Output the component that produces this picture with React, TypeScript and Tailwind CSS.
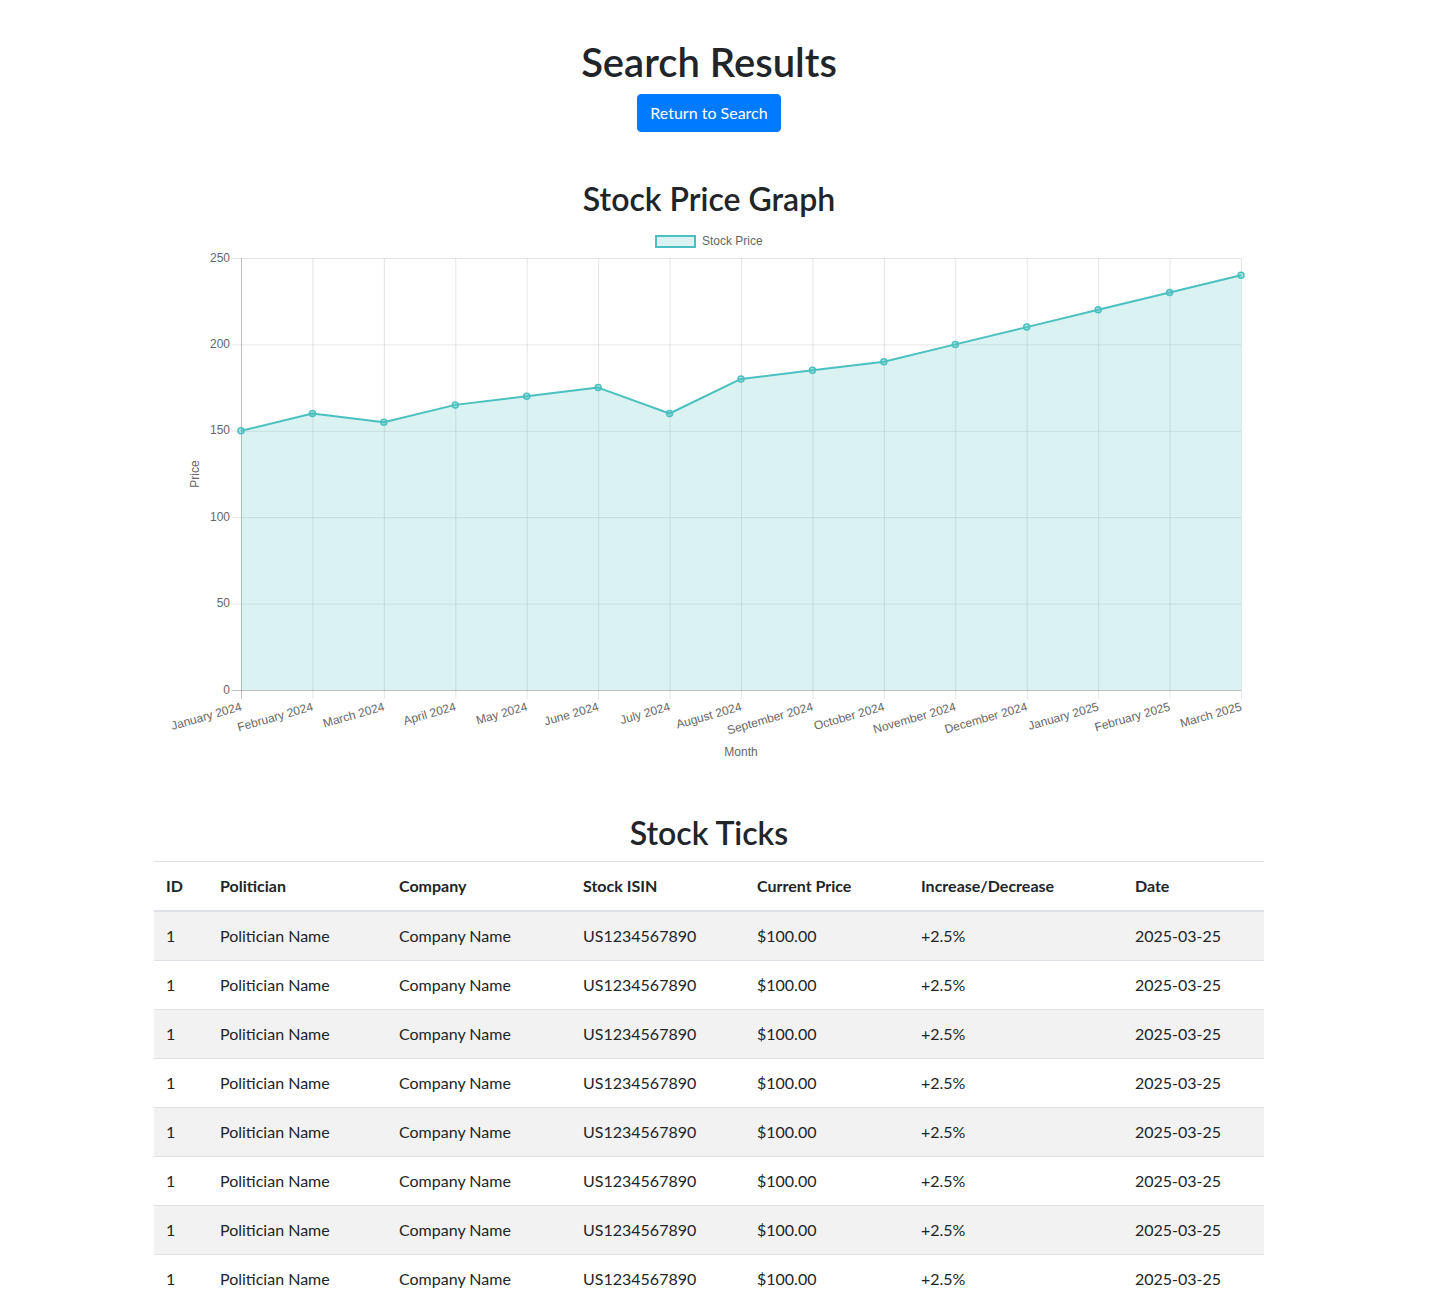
import React from "react";

const months = [
  "January 2024",
  "February 2024",
  "March 2024",
  "April 2024",
  "May 2024",
  "June 2024",
  "July 2024",
  "August 2024",
  "September 2024",
  "October 2024",
  "November 2024",
  "December 2024",
  "January 2025",
  "February 2025",
  "March 2025",
];
const values = [150, 160, 155, 165, 170, 175, 160, 180, 185, 190, 200, 210, 220, 230, 240];

const L = 87;
const R = 1087;
const T = 32;
const B = 464;
const xAt = (i: number) => L + ((R - L) * i) / (months.length - 1);
const yAt = (v: number) => B - ((B - T) * v) / 250;

function Chart() {
  const pts = values.map((v, i) => [xAt(i), yAt(v)] as const);
  const line = pts.map((p) => `${p[0]},${p[1]}`).join(" ");
  const area = `${L},${B} ${line} ${R},${B}`;
  const font = '"Liberation Sans", Arial, Helvetica, sans-serif';
  return (
    <svg width={1110} height={556} viewBox="0 0 1110 556" className="block" style={{ fontFamily: font }}>
      {/* legend */}
      <rect x={502} y={10} width={39} height={11} fill="rgba(75,192,192,0.2)" stroke="rgb(75,192,192)" strokeWidth={2} />
      <text x={548} y={15.5} fontSize={12} fill="#666" dominantBaseline="middle">
        Stock Price
      </text>
      {/* horizontal grid */}
      {[0, 50, 100, 150, 200, 250].map((v) => (
        <g key={v}>
          <line
            x1={78}
            x2={R}
            y1={yAt(v) + 0.5}
            y2={yAt(v) + 0.5}
            stroke={v === 0 ? "rgba(0,0,0,0.25)" : "rgba(0,0,0,0.1)"}
            strokeWidth={1}
          />
          <text x={76} y={yAt(v) + 0.5} fontSize={12} fill="#666" textAnchor="end" dominantBaseline="middle">
            {v}
          </text>
        </g>
      ))}
      {/* vertical grid */}
      {months.map((m, i) => (
        <line
          key={m}
          x1={xAt(i) + 0.5}
          x2={xAt(i) + 0.5}
          y1={T}
          y2={B + 9}
          stroke={i === 0 ? "rgba(0,0,0,0.25)" : "rgba(0,0,0,0.1)"}
          strokeWidth={1}
        />
      ))}
      {/* area + line */}
      <polygon points={area} fill="rgba(75,192,192,0.2)" />
      <polyline points={line} fill="none" stroke="rgb(75,192,192)" strokeWidth={2} strokeLinejoin="round" />
      {pts.map((p, i) => (
        <circle key={i} cx={p[0]} cy={p[1]} r={3} fill="rgba(75,192,192,0.4)" stroke="rgb(75,192,192)" strokeWidth={1.5} />
      ))}
      {/* x labels */}
      {months.map((m, i) => (
        <text
          key={m}
          x={xAt(i) + 0.5}
          y={481}
          fontSize={12}
          fill="#666"
          textAnchor="end"
          dominantBaseline="middle"
          transform={`rotate(-16 ${xAt(i) + 0.5} 481)`}
        >
          {m}
        </text>
      ))}
      <text x={587} y={527} fontSize={12} fill="#666" textAnchor="middle" dominantBaseline="middle">
        Month
      </text>
      <text
        x={42}
        y={248}
        fontSize={12}
        fill="#666"
        textAnchor="middle"
        dominantBaseline="middle"
        transform="rotate(-90 42 248)"
      >
        Price
      </text>
    </svg>
  );
}

const rows = Array.from({ length: 8 }, () => ({
  id: "1",
  politician: "Politician Name",
  company: "Company Name",
  isin: "US1234567890",
  price: "$100.00",
  change: "+2.5%",
  date: "2025-03-25",
}));

const headers = ["ID", "Politician", "Company", "Stock ISIN", "Current Price", "Increase/Decrease", "Date"];
const widths = ["w-[54px]", "w-[179px]", "w-[184px]", "w-[174px]", "w-[164px]", "w-[214px]", "w-[141px]"];

export default function App() {
  return (
    <div className="min-h-screen bg-white text-[#212529] font-['Lato','Noto_Sans',sans-serif]">
      <div className="ml-[154px] w-[1110px] pt-[38px]">
        <div className="text-center">
          <h1 className="text-[40px] leading-[1.2] font-semibold mb-2">Search Results</h1>
          <button className="inline-block rounded bg-[#007bff] border border-[#007bff] text-white text-base leading-6 px-3 py-[6px]">
            Return to Search
          </button>
          <h2 className="mt-12 mb-2 text-[32px] leading-[1.2] font-semibold">Stock Price Graph</h2>
        </div>
        <Chart />
        <h2 className="mt-8 mb-2 text-center text-[32px] leading-[1.2] font-semibold">Stock Ticks</h2>
        <table className="w-full table-fixed text-base leading-6">
          <colgroup>
            {widths.map((w, i) => (
              <col key={i} className={w} />
            ))}
          </colgroup>
          <thead>
            <tr>
              {headers.map((h) => (
                <th key={h} className="p-3 text-left font-bold align-bottom border-t border-t-[#dee2e6] border-b-2 border-b-[#dee2e6]">
                  {h}
                </th>
              ))}
            </tr>
          </thead>
          <tbody>
            {rows.map((r, i) => (
              <tr key={i} className={i % 2 === 0 ? "bg-[#f2f2f2]" : "bg-white"}>
                <td className="p-3 border-t border-[#dee2e6]">{r.id}</td>
                <td className="p-3 border-t border-[#dee2e6]">{r.politician}</td>
                <td className="p-3 border-t border-[#dee2e6]">{r.company}</td>
                <td className="p-3 border-t border-[#dee2e6]">{r.isin}</td>
                <td className="p-3 border-t border-[#dee2e6]">{r.price}</td>
                <td className="p-3 border-t border-[#dee2e6]">{r.change}</td>
                <td className="p-3 border-t border-[#dee2e6]">{r.date}</td>
              </tr>
            ))}
          </tbody>
        </table>
      </div>
    </div>
  );
}
